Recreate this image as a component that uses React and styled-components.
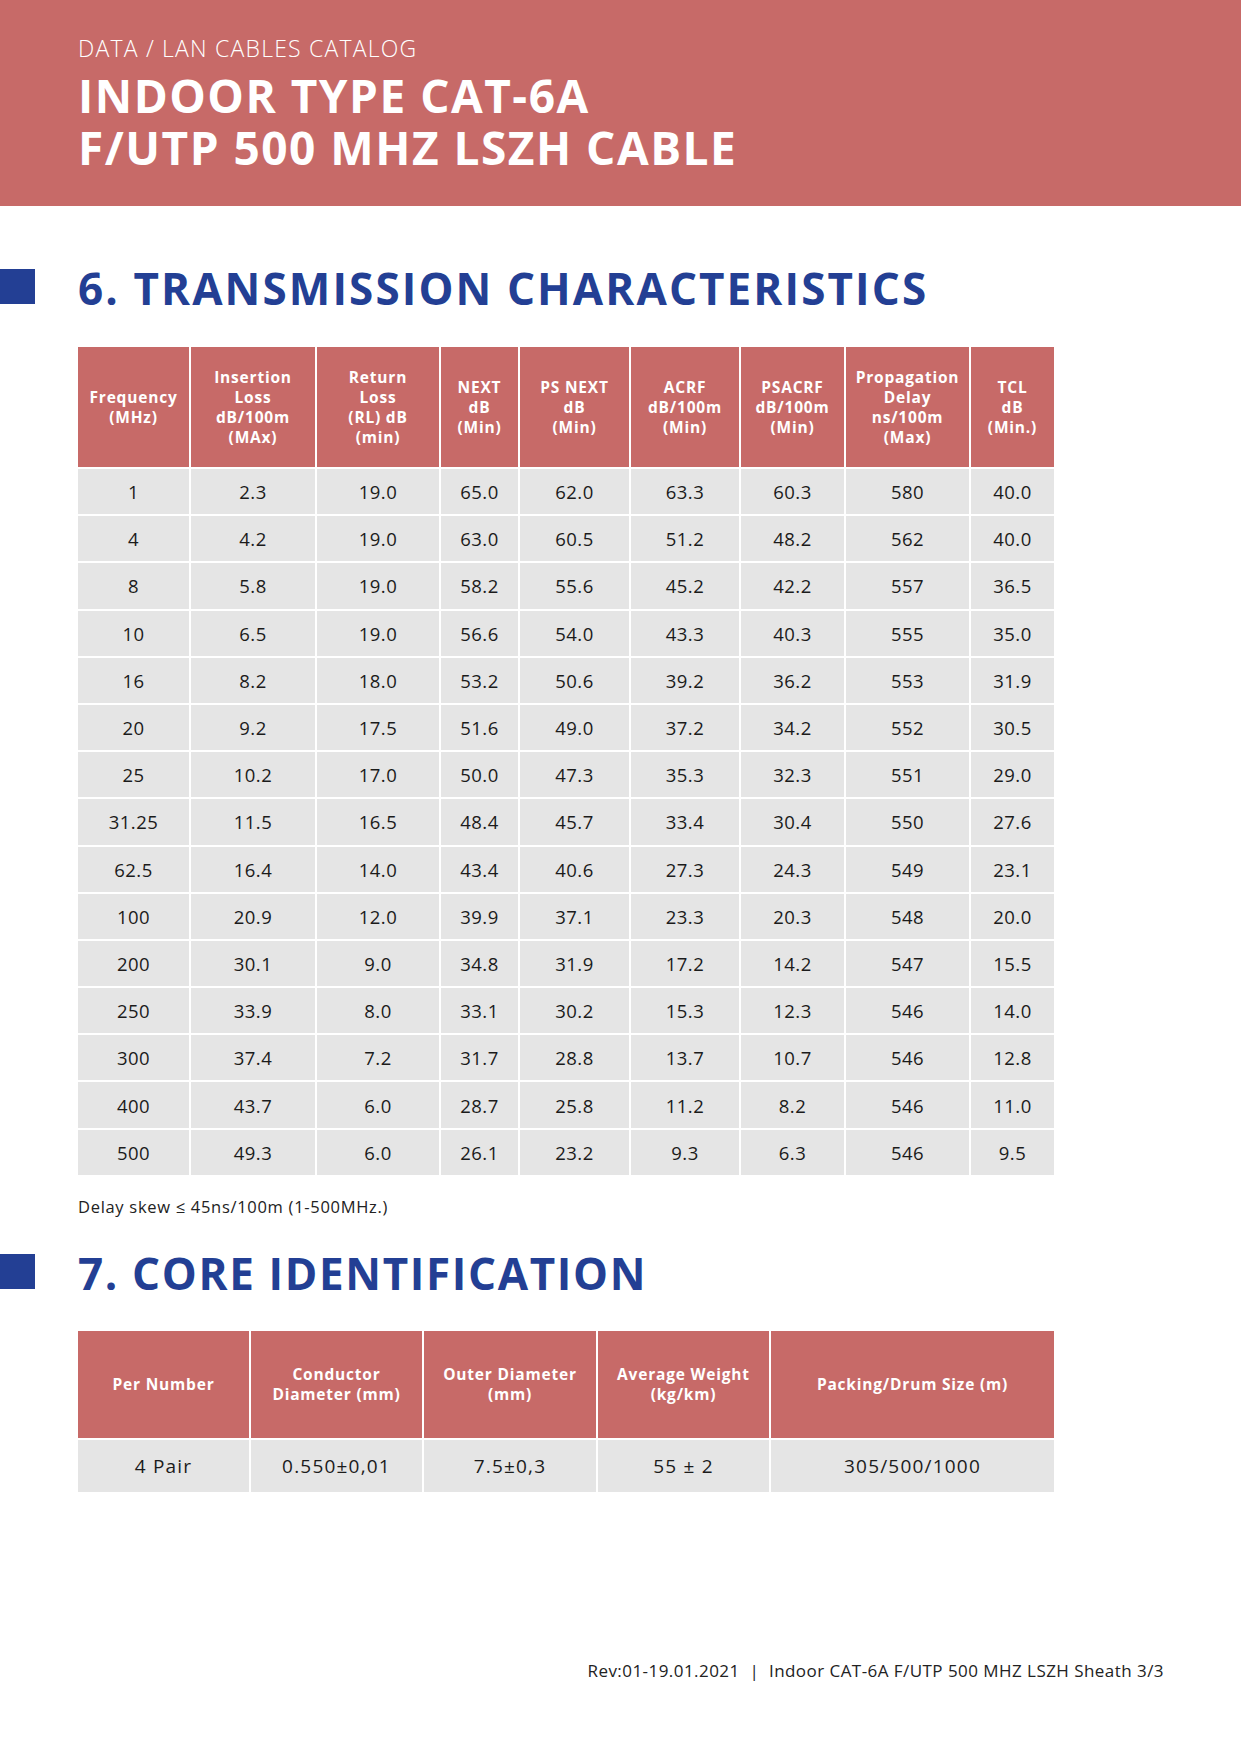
import React from 'react';
import styled, { createGlobalStyle } from 'styled-components';

const RED = '#c76a68';
const BLUE = '#233f94';
const GREY = '#e5e5e5';

const GlobalStyle = createGlobalStyle`
    body {
        margin: 0;
        background: #ffffff;
        font-family: 'Open Sans', 'Liberation Sans', sans-serif;
        color: #1b1b1b;
    }
`;

const transmission = [
    ['1', '2.3', '19.0', '65.0', '62.0', '63.3', '60.3', '580', '40.0'],
    ['4', '4.2', '19.0', '63.0', '60.5', '51.2', '48.2', '562', '40.0'],
    ['8', '5.8', '19.0', '58.2', '55.6', '45.2', '42.2', '557', '36.5'],
    ['10', '6.5', '19.0', '56.6', '54.0', '43.3', '40.3', '555', '35.0'],
    ['16', '8.2', '18.0', '53.2', '50.6', '39.2', '36.2', '553', '31.9'],
    ['20', '9.2', '17.5', '51.6', '49.0', '37.2', '34.2', '552', '30.5'],
    ['25', '10.2', '17.0', '50.0', '47.3', '35.3', '32.3', '551', '29.0'],
    ['31.25', '11.5', '16.5', '48.4', '45.7', '33.4', '30.4', '550', '27.6'],
    ['62.5', '16.4', '14.0', '43.4', '40.6', '27.3', '24.3', '549', '23.1'],
    ['100', '20.9', '12.0', '39.9', '37.1', '23.3', '20.3', '548', '20.0'],
    ['200', '30.1', '9.0', '34.8', '31.9', '17.2', '14.2', '547', '15.5'],
    ['250', '33.9', '8.0', '33.1', '30.2', '15.3', '12.3', '546', '14.0'],
    ['300', '37.4', '7.2', '31.7', '28.8', '13.7', '10.7', '546', '12.8'],
    ['400', '43.7', '6.0', '28.7', '25.8', '11.2', '8.2', '546', '11.0'],
    ['500', '49.3', '6.0', '26.1', '23.2', '9.3', '6.3', '546', '9.5'],
];

const transmissionHead = [
    ['Frequency', '(MHz)'],
    ['Insertion', 'Loss', 'dB/100m', '(MAx)'],
    ['Return', 'Loss', '(RL) dB', '(min)'],
    ['NEXT', 'dB', '(Min)'],
    ['PS NEXT', 'dB', '(Min)'],
    ['ACRF', 'dB/100m', '(Min)'],
    ['PSACRF', 'dB/100m', '(Min)'],
    ['Propagation', 'Delay', 'ns/100m', '(Max)'],
    ['TCL', 'dB', '(Min.)'],
];

const coreHead = [
    ['Per Number'],
    ['Conductor', 'Diameter (mm)'],
    ['Outer Diameter', '(mm)'],
    ['Average Weight', '(kg/km)'],
    ['Packing/Drum Size (m)'],
];

const core = ['4 Pair', '0.550±0,01', '7.5±0,3', '55 ± 2', '305/500/1000'];

export default function App() {
    return (
        <>
            <GlobalStyle />
            <Page>
                <Header>
                    <Catalog>DATA / LAN CABLES CATALOG</Catalog>
                    <Title>
                        <TitleLine>INDOOR TYPE CAT-6A</TitleLine>
                        <TitleLine>F/UTP 500 MHZ LSZH CABLE</TitleLine>
                    </Title>
                </Header>

                <Section top={63}>
                    <SectionTitle>
                        <Marker />
                        <Heading spacing={2.1}>6. TRANSMISSION CHARACTERISTICS</Heading>
                    </SectionTitle>
                    <Table
                        columns="111px 124px 122px 77px 109px 108px 103px 123px 83px"
                        rows="120px repeat(15, 45.2px)"
                        top={43}
                    >
                        {transmissionHead.map((lines, i) => (
                            <HeadCell key={i}>
                                {lines.map((l, j) => <span key={j}>{l}</span>)}
                            </HeadCell>
                        ))}
                        {transmission.map((row, r) =>
                            row.map((val, c) => <Cell key={r + '-' + c}>{val}</Cell>)
                        )}
                    </Table>
                    <Note>Delay skew ≤ 45ns/100m (1-500MHz.)</Note>
                </Section>

                <Section top={36}>
                    <SectionTitle>
                        <Marker />
                        <Heading spacing={1.65}>7. CORE IDENTIFICATION</Heading>
                    </SectionTitle>
                    <Table columns="171px 171px 172px 171px 283px" rows="107px 52px" top={42}>
                        {coreHead.map((lines, i) => (
                            <HeadCell key={i}>
                                {lines.map((l, j) => <span key={j}>{l}</span>)}
                            </HeadCell>
                        ))}
                        {core.map((val, i) => <Cell key={i} wide>{val}</Cell>)}
                    </Table>
                </Section>

                <Footer>Rev:01-19.01.2021&nbsp;&nbsp;|&nbsp;&nbsp;Indoor CAT-6A F/UTP 500 MHZ LSZH Sheath 3/3</Footer>
            </Page>
        </>
    );
}

const Page = styled.div`
    width: 1241px;
    min-height: 1754px;
    display: flex;
    flex-direction: column;
`;

const Header = styled.div`
    height: 206px;
    box-sizing: border-box;
    background: ${RED};
    color: #ffffff;
    padding: 33px 78px 0;
`;

const Catalog = styled.div`
    font-size: 23px;
    font-weight: 300;
    line-height: 30px;
    letter-spacing: 1.2px;
`;

const Title = styled.h1`
    margin: 6px 0 0;
    font-size: 46px;
    font-weight: 700;
    letter-spacing: 1.5px;
    display: flex;
    flex-direction: column;
`;

const TitleLine = styled.span`
    height: 52px;
    line-height: 52px;
`;

const Section = styled.section`
    margin-top: ${props => props.top}px;
`;

const SectionTitle = styled.div`
    display: flex;
    align-items: center;
    gap: 43px;
    height: 35px;
`;

const Heading = styled.h2`
    margin: 4px 0 0;
    font-size: 44px;
    font-weight: 700;
    line-height: 35px;
    color: ${BLUE};
    letter-spacing: ${props => props.spacing}px;
`;

const Marker = styled.div`
    width: 35px;
    height: 35px;
    background: ${BLUE};
`;

const Table = styled.div`
    display: grid;
    grid-template-columns: ${props => props.columns};
    grid-template-rows: ${props => props.rows};
    gap: 2px;
    margin: ${props => props.top}px 0 0 78px;
    width: 976px;
`;

const HeadCell = styled.div`
    background: ${RED};
    color: #ffffff;
    display: flex;
    flex-direction: column;
    align-items: center;
    justify-content: center;
    text-align: center;
    font-size: 15.5px;
    font-weight: 700;
    line-height: 20px;
    letter-spacing: 0.8px;
`;

const Cell = styled.div`
    background: ${GREY};
    display: flex;
    align-items: center;
    justify-content: center;
    font-size: ${props => (props.wide ? 19 : 18.5)}px;
    letter-spacing: ${props => (props.wide ? 1.2 : 0.5)}px;
    color: #1b1b1b;
`;

const Note = styled.div`
    margin: 20px 0 0 78px;
    font-size: 16.5px;
    letter-spacing: 0.7px;
    color: #222222;
`;

const Footer = styled.div`
    margin-top: auto;
    margin-bottom: 72px;
    padding-right: 77px;
    text-align: right;
    font-size: 17px;
    letter-spacing: 0.45px;
    color: #222222;
`;
